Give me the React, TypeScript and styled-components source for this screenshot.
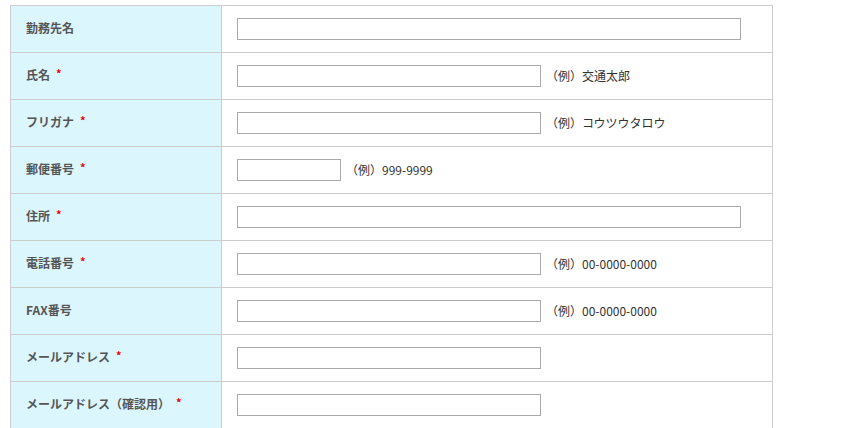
import React from "react";
import styled, { createGlobalStyle } from "styled-components";

const GlobalStyle = createGlobalStyle`
  body {
    margin: 0;
    background: #fff;
    font-family: "Noto Sans CJK JP", "Noto Sans", sans-serif;
  }
`;

type Field = {
  label: string;
  required?: boolean;
  size: "l" | "m" | "s";
  example?: string;
};

const fields: Field[] = [
  { label: "勤務先名", size: "l" },
  { label: "氏名", required: true, size: "m", example: "（例）交通太郎" },
  { label: "フリガナ", required: true, size: "m", example: "（例）コウツウタロウ" },
  { label: "郵便番号", required: true, size: "s", example: "（例）999-9999" },
  { label: "住所", required: true, size: "l" },
  { label: "電話番号", required: true, size: "m", example: "（例）00-0000-0000" },
  { label: "FAX番号", size: "m", example: "（例）00-0000-0000" },
  { label: "メールアドレス", required: true, size: "m" },
  { label: "メールアドレス（確認用）", required: true, size: "m" },
];

const widths = { l: 504, m: 304, s: 104 };

export default function App() {
  return (
    <>
      <GlobalStyle />
      <Form>
        <Table>
          <colgroup>
            <col style={{ width: 211 }} />
            <col />
          </colgroup>
          <tbody>
            {fields.map((f) => (
              <tr key={f.label}>
                <Label>
                  {f.label}
                  {f.required && <Req>*</Req>}
                </Label>
                <Cell>
                  <Input type="text" $w={widths[f.size]} />
                  {f.example && <Example>{f.example}</Example>}
                </Cell>
              </tr>
            ))}
          </tbody>
        </Table>
      </Form>
    </>
  );
}

const Form = styled.form`
  padding: 5px 0 0 10px;
`;

const Table = styled.table`
  border-collapse: collapse;
  width: 763px;
  table-layout: fixed;
`;

const Label = styled.th`
  height: 43px;
  padding: 0 15px 3px;
  background: #dcf6fd;
  border: 1px solid #ccc;
  color: #555;
  font-size: 12px;
  font-weight: bold;
  text-align: left;
  vertical-align: middle;
  white-space: nowrap;
`;

const Req = styled.span`
  color: #e00;
  margin-left: 6px;
  font-size: 11px;
  position: relative;
  top: -2px;
`;

const Cell = styled.td`
  height: 46px;
  padding: 0 15px;
  border: 1px solid #ccc;
  vertical-align: middle;
  font-size: 12px;
  color: #333;
`;

const Input = styled.input<{ $w: number }>`
  width: ${(p) => p.$w}px;
  height: 22px;
  box-sizing: border-box;
  border: 1px solid #aaa;
  padding: 2px 4px;
  vertical-align: middle;
  font-size: 12px;
`;

const Example = styled.span`
  margin-left: 5px;
  vertical-align: middle;
  position: relative;
  top: -1px;
`;
